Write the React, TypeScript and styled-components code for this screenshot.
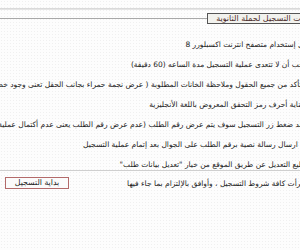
import styled, { createGlobalStyle } from "styled-components";

// ─── Data ─────────────────────────────────────────────────────────────────────

const NOTES: string[] = [
  "يفضل إستخدام متصفح انترنت اكسبلورر 8",
  "2- يجب أن لا تتعدى عملية التسجيل مدة الساعه (60 دقيقة)",
  "3- التأكد من جميع الحقول وملاحظة الخانات المطلوبة ( عرض نجمة حمراء بجانب الحقل تعنى وجود خطا في البيانات )",
  "4- بعناية أحرف رمز التحقق المعروض باللغة الأنجليزية",
  "5- عند ضغط زر التسجيل سوف يتم عرض رقم الطلب (عدم عرض رقم الطلب يعنى عدم أكتمال عملية التسجيل)",
  "سيتم ارسال رسالة نصية برقم الطلب على الجوال بعد إتمام عملية التسجيل",
  "تستطيع التعديل عن طريق الموقع من خيار \"تعديل بيانات طلب\"",
];

// ─── Styled ───────────────────────────────────────────────────────────────────

const GlobalStyle = createGlobalStyle`
  html, body {
    margin: 0;
    padding: 0;
    overflow: hidden;
    background-color: #fdfdfd;
    background-image: radial-gradient(#f0f0f0 0.6px, transparent 0.8px);
    background-size: 3px 3px;
  }
`;

const Page = styled.div`
  box-sizing: border-box;
  width: 351px;
  direction: rtl;
  font-family: "DejaVu Sans", "Noto Sans", sans-serif;
  font-size: 7.5px;
  color: #222;
  padding-top: 8px;
`;

const TopRule = styled.div`
  height: 2px;
  background: linear-gradient(#d4d4d4, #ebebeb);
`;

const Box = styled.fieldset`
  margin: 3px 0 0;
  padding: 0;
  border: none;
  border-top: 1px solid #a8a8a8;
  min-width: 0;
`;

const Legend = styled.legend`
  margin-right: 26px;
  padding: 0 5px 0 8px;
  height: 9px;
  line-height: 9px;
  border: 1px solid #555;
  background: #f2f2ee;
  color: #4a2a2a;
  font-size: 8px;
`;

const NoteList = styled.div`
  display: flex;
  flex-direction: column;
  gap: 8px;
  padding: 15px 35px 0 0;
`;

const Note = styled.p`
  margin: 0;
  height: 12px;
  line-height: 12px;
  white-space: nowrap;
`;

const Divider = styled.div`
  margin-top: -1px;
  height: 1px;
  background: #cfcfcf;
`;

const AgreeRow = styled.div`
  display: flex;
  align-items: center;
  gap: 6px;
  padding: 6px 0 0 5px;
  white-space: nowrap;
`;

const Check = styled.input`
  margin: 0;
  width: 11px;
  height: 11px;
`;

const StartButton = styled.button`
  margin-right: auto;
  width: 64px;
  height: 12px;
  padding: 0;
  border: 1px solid #b36a6a;
  background: #fbfbfb;
  color: #222;
  font-family: inherit;
  font-size: 7.8px;
  line-height: 10px;
`;

// ─── Component ────────────────────────────────────────────────────────────────

export default function App() {
  return (
    <>
      <GlobalStyle />
      <Page>
        <TopRule />
        <Box>
          <Legend>تعليمات التسجيل لحملة الثانوية</Legend>
          <NoteList>
            {NOTES.map((n) => (
              <Note key={n}>{n}</Note>
            ))}
          </NoteList>
          <Divider />
          <AgreeRow>
            <Check type="checkbox" />
            <span>أقر بأنني قرأت كافة شروط التسجيل ، وأوافق بالإلتزام بما جاء فيها</span>
            <StartButton>بداية التسجيل</StartButton>
          </AgreeRow>
        </Box>
      </Page>
    </>
  );
}
